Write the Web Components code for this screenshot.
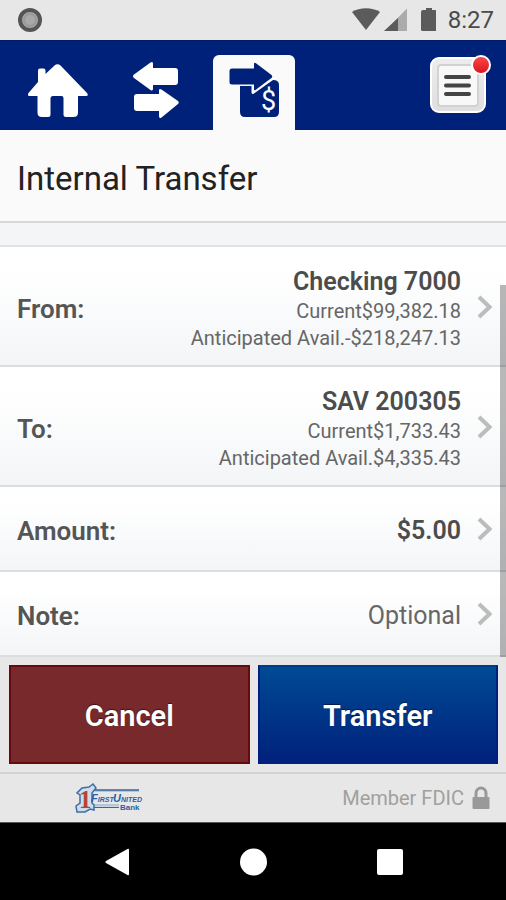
<!DOCTYPE html>
<html lang="en">
<head>
<meta charset="utf-8">
<meta name="viewport" content="width=device-width, initial-scale=1">
<title>Internal Transfer</title>
<style>
  html { height: 100%; }
  body { margin: 0; min-height: 100%; display: flex; background: #000; font-family: Roboto, "Liberation Sans", sans-serif; color: #4c4c4c; }
</style>
</head>
<body>
<transfer-app></transfer-app>
<script>
const define = (name, html) => {
  const template = document.createElement('template');
  template.innerHTML = html;
  customElements.define(name, class extends HTMLElement {
    constructor() {
      super();
      this.attachShadow({ mode: 'open' }).append(template.content.cloneNode(true));
    }
  });
};

define('status-bar', `
<style>
  :host { display: flex; align-items: center; justify-content: space-between; height: 40px; padding: 0 12px 0 18px; background: #e7e7e7; color: #4a4a4a; font-size: 24px; line-height: 42px; }
  div { display: flex; align-items: center; gap: 8px; }
  svg { display: block; }
  time { padding-left: 4px; }
</style>
<svg width="24" height="24" viewBox="0 0 24 24"><circle cx="12" cy="12" r="10" fill="#a9a9a9" stroke="#555" stroke-width="4"/><circle cx="12" cy="12" r="6" fill="none" stroke="#9a9a9a" stroke-width="2"/></svg>
<div>
  <svg width="84" height="24" viewBox="0 0 84 24"><path d="M0 4C8-1 20-1 28 4L14 22Z" fill="#5b5b5b"/><path d="M55 .5V23H33Z" fill="#ababab"/><path d="M46 10V23H32Z" fill="#5b5b5b"/><path d="M74 0h6v2h3q2 0 2 2v18q0 1-2 1H71q-2 0-2-1V4q0-2 2-2h3z" fill="#5b5b5b"/></svg>
  <time>8:27</time>
</div>`);

define('tab-link', `
<style>
  :host { display: flex; width: 82px; }
  a { flex: 1; display: flex; justify-content: center; color: #fff; border-radius: 6px 6px 0 0; }
  :host([current]) a { background: #fafafa; color: #00217a; }
</style>
<a href="#"><slot></slot></a>`);

define('tab-bar', `
<style>
  :host { display: flex; justify-content: space-between; height: 75px; padding: 14px 20px 0 17px; background: #00217a; border-top: 1px solid #001a64; }
  nav { display: flex; gap: 16px; }
  svg { display: block; }
  button { position: relative; width: 56px; height: 56px; margin: 2px 0 0; padding: 0; border: 0; background: none; }
  .dot { position: absolute; top: -2px; right: -5px; width: 16px; height: 16px; border: 2px solid #fff; border-radius: 50%; background: linear-gradient(#fa4747, #dc1420); }
</style>
<nav aria-label="Main">
  <tab-link><svg role="img" aria-label="Home" width="60" height="74" viewBox="0 0 60 74"><path d="M10 27V15.500q0-2 2-2h3.500q2 0 2 2V19L26.500 10.500q3-2.500 6 0L59 38q2 3-1 3H50v16.500q0 4.500-4.500 4.500H38q-2.500 0-2.500-2.500V43q0-2-2-2H25q-2.500 0-2.500 2.500V59.500q0 2.500-2.500 2.500H14q-4.500 0-4.500-4.500V41H1.500Q-1 41 .5 38z" fill="currentColor"/></svg></tab-link>
  <tab-link><svg role="img" aria-label="Transfers" width="46" height="74" viewBox="0 0 46 74"><path d="M1 19.500 17.500 7.500q2.500-1.500 2.500 1V13H42q3 0 3 3V27q0 3-3 3H20v3.500q0 3-2.500 1.500L1 23q-2-1.800 0-3.500z" fill="currentColor"/><path d="M45 46 28.500 34.500Q26 33 26 35.500V39H4q-3 0-3 3V53q0 3 3 3H26v5q0 3 2.500 1.500L45 49q1.500-1.500 0-3z" fill="currentColor"/></svg></tab-link>
  <tab-link current><svg role="img" aria-label="Internal transfer" width="50" height="74" viewBox="0 0 50 74"><path d="M3 13.500H25V9q0-2 2-.8L42.500 20q1.500 1.500 0 3L37 27 26.500 35Q25 36 25 34v-4.500H3q-2.500 0-2.500-2.500V16q0-2.500 2.500-2.500z" fill="currentColor"/><path d="M11 31H22.500v6q0 3 2.500 1.500L44 25q6 0 6 5V57q0 5-5 5H16q-5 0-5-5z" fill="currentColor"/><text x="32" y="55" font-family="Roboto, sans-serif" font-size="27" fill="#fff">$</text></svg></tab-link>
</nav>
<button type="button" aria-label="Menu">
  <svg width="56" height="56" viewBox="0 0 56 56"><defs><linearGradient id="g" x2="0" y2="1"><stop stop-color="#ededed"/><stop offset="1" stop-color="#dedede"/></linearGradient></defs><rect x="1" y="1" width="54" height="54" rx="8" fill="url(#g)" stroke="#fff" stroke-width="2"/><rect x="8" y="8" width="40" height="41" rx="3" fill="#f8f8f8" stroke="#d2d2d2" stroke-width="2"/><path d="M16 20H39M16 28.500H39M16 37H39" stroke="#444" stroke-width="4" stroke-linecap="round"/></svg>
  <span class="dot"></span>
</button>`);

define('transfer-row', `
<style>
  :host { display: block; border-bottom: 2px solid #dbdddf; background: linear-gradient(#fff 20%, #f3f5f7); }
  button { display: grid; grid-template-columns: auto 1fr auto; align-items: center; gap: 16px; width: 100%; padding: 19px 14px 13px 17px; border: 0; background: none; font: 25px/32px Roboto, sans-serif; color: inherit; text-align: left; }
  :host([single]) button { padding-top: 28px; padding-bottom: 23px; }
  .label { font-size: 26px; font-weight: 600; color: #555; }
  .value { text-align: right; }
  svg { display: block; padding-bottom: 4px; }
</style>
<button type="button">
  <span class="label"><slot name="label"></slot></span>
  <span class="value"><slot></slot></span>
  <svg width="15" height="24" viewBox="0 0 15 24" aria-hidden="true"><path d="M2 2 12.500 12 2 22" fill="none" stroke="#bcbcbc" stroke-width="4"/></svg>
</button>`);

define('account-summary', `
<style>
  :host { display: block; }
  .name { display: block; font-weight: 600; }
  .line { display: flex; justify-content: flex-end; font-size: 20px; line-height: 27px; color: #666; }
</style>
<span class="name"><slot name="name"></slot></span>
<span class="line"><span>Current</span><slot name="current"></slot></span>
<span class="line"><span>Anticipated Avail.</span><slot name="available"></slot></span>`);

define('transfer-form', `
<style>
  :host { display: block; position: relative; padding-top: 22px; background: #f3f5f7; }
  .list { border-top: 2px solid #e0e2e4; }
  strong { font-weight: 600; }
  .optional { color: #666; }
  .thumb { position: absolute; top: 62px; right: 0; bottom: 0; width: 6px; background: rgba(0, 0, 0, .28); }
</style>
<div class="list">
  <transfer-row><span slot="label">From:</span><account-summary><span slot="name">Checking 7000</span><span slot="current">$99,382.18</span><span slot="available">-$218,247.13</span></account-summary></transfer-row>
  <transfer-row><span slot="label">To:</span><account-summary><span slot="name">SAV 200305</span><span slot="current">$1,733.43</span><span slot="available">$4,335.43</span></account-summary></transfer-row>
  <transfer-row single><span slot="label">Amount:</span><strong>$5.00</strong></transfer-row>
  <transfer-row single><span slot="label">Note:</span><span class="optional">Optional</span></transfer-row>
</div>
<div class="thumb"></div>`);

define('action-bar', `
<style>
  :host { display: grid; grid-template-columns: 1fr 1fr; gap: 8px; padding: 8px 8px 8px 9px; background: #e7e7e7; border-bottom: 2px solid #d2d2d2; }
  button { padding: 32px 0 29px; border: 2px solid #660a0e; background: #77292b; color: #fff; font: 600 29px/34px Roboto, sans-serif; text-shadow: 0 -1px 1px rgba(0, 0, 0, .5); }
  .primary { border-color: #001f80; background: linear-gradient(#004a94, #00217c) padding-box; border-top-color: #003c8c; }
</style>
<button type="button">Cancel</button>
<button type="button" class="primary">Transfer</button>`);

define('bank-footer', `
<style>
  :host { display: flex; align-items: center; justify-content: space-between; height: 48px; padding: 0 16px 0 75px; background: #e7e7e7; color: #a0a0a0; font-size: 20px; }
  svg { display: block; overflow: visible; }
  .fdic { display: flex; align-items: center; gap: 8px; }
</style>
<svg width="66" height="30" viewBox="0 0 66 30" role="img" aria-label="First United Bank">
  <path d="M20 7H64V9H20z" fill="#b3c6de"/><path d="M19 7H64" stroke="#3d6398" stroke-width="1.500"/>
  <path d="M16 21H44v2.500H16z" fill="#b3c6de"/><path d="M16 24.500H44" stroke="#3d6398" stroke-width="1"/>
  <path d="M7 5 14 4 18 1 21 5 17 10V20L19 22V27L15 26 10 29H2L1 23 5 20V12L2 10Z" fill="#cfdcec" stroke="#3e6da6" stroke-width="1.500"/>
  <text x="4" y="25" font-family="Liberation Serif, serif" font-weight="700" font-size="25" fill="#b64434">1</text>
  <g font-family="Liberation Sans, sans-serif" font-weight="700" font-style="italic" fill="#2a5fa3"><text x="16" y="19" font-size="11">F<tspan font-size="7">IRST</tspan></text><text x="38" y="19" font-size="11">U<tspan font-size="7">NITED</tspan></text></g>
  <text x="45" y="27" font-family="Liberation Sans, sans-serif" font-weight="700" font-size="8" fill="#2a5fa3">Bank</text>
</svg>
<div class="fdic"><span>Member FDIC</span><svg width="18" height="24" viewBox="0 0 18 24" aria-hidden="true"><path d="M4 12V7.500a5 5.500 0 0 1 10 0V12" fill="none" stroke="#999" stroke-width="3"/><rect x=".5" y="11" width="17" height="12" rx="1" fill="#999"/></svg></div>`);

define('system-nav', `
<style>
  :host { display: flex; flex: 1; align-items: center; justify-content: space-between; min-height: 76px; padding: 0 102px 0 104px; border-top: 1px solid #555; background: #000; }
  button { display: block; padding: 0; border: 0; background: none; }
  svg { display: block; }
</style>
<button type="button" aria-label="Back"><svg width="28" height="28" viewBox="0 0 28 28"><path d="M23.500 1q1.500-.7 1.500 1V26q0 1.700-1.500 1L2 15q-1.500-1 0-2z" fill="#fff"/></svg></button>
<button type="button" aria-label="Home screen"><svg width="28" height="28" viewBox="0 0 28 28"><circle cx="13.500" cy="14" r="13.500" fill="#fff"/></svg></button>
<button type="button" aria-label="Recent apps"><svg width="28" height="28" viewBox="0 0 28 28"><rect x="1" y="1" width="26" height="26" rx="2" fill="#fff"/></svg></button>`);

define('transfer-app', `
<style>
  :host { display: flex; flex: 1; flex-direction: column; min-width: 0; }
  h1 { margin: 0; padding: 29px 17px 23px; border-bottom: 2px solid #d6d7d8; background: #fafafa; color: #222; font-size: 33px; line-height: 39px; font-weight: 400; }
</style>
<status-bar></status-bar>
<tab-bar></tab-bar>
<h1>Internal Transfer</h1>
<transfer-form></transfer-form>
<action-bar></action-bar>
<bank-footer></bank-footer>
<system-nav></system-nav>`);
</script>
</body>
</html>
